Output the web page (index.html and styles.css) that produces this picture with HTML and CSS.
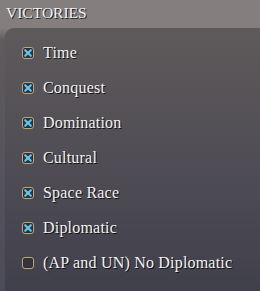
FILE: index.html
```html
<!DOCTYPE html>
<html>
<head>
<meta charset="utf-8">
<link rel="stylesheet" href="styles.css">
</head>
<body>
<div class="page">
  <h1 class="title">VICTORIES</h1>
  <div class="wrap">
    <div class="panel">
      <label class="row"><span class="box on"></span><span class="lbl">Time</span></label>
      <label class="row"><span class="box on"></span><span class="lbl">Conquest</span></label>
      <label class="row"><span class="box on"></span><span class="lbl">Domination</span></label>
      <label class="row"><span class="box on"></span><span class="lbl">Cultural</span></label>
      <label class="row"><span class="box on"></span><span class="lbl">Space Race</span></label>
      <label class="row"><span class="box on"></span><span class="lbl">Diplomatic</span></label>
      <label class="row"><span class="box"></span><span class="lbl">(AP and UN) No Diplomatic</span></label>
    </div>
  </div>
</div>
</body>
</html>
```
FILE: styles.css
```css
html, body { margin: 0; padding: 0; }
body {
  width: 260px; height: 291px; overflow: hidden;
  background: linear-gradient(#847e7f 0, #847e7f 28px, #5f5b5f 40px, #4c4b58 291px);
  font-family: "Liberation Serif", serif;
}
.page { display: flex; flex-direction: column; height: 291px; }
.title {
  margin: 0; height: 28px; box-sizing: border-box;
  padding: 4px 0 0 6px;
  font-size: 15.5px; line-height: 18px; font-weight: normal; color: #f4f4f4;
  text-shadow: 1px 1px 0 #1a1a1a;
}
.wrap { flex: 1; padding-left: 5px; }
.panel {
  height: 100%;
  border-top-left-radius: 9px;
  background: linear-gradient(#5e5a5b, #504d55 50%, #40404c);
  padding: 7px 0 0 17px;
  box-sizing: border-box;
  display: flex; flex-direction: column;
}
.row { display: flex; align-items: center; height: 35px; }
.box {
  width: 10px; height: 10px;
  border: 1.5px solid #bba67e; border-radius: 3px;
  background: #34343c;
  box-shadow: 0 0 1px #6b5f48, inset 0 0 1px #000;
  position: relative;
  margin-right: 9px;
  flex: none;
}
.box.on::before, .box.on::after {
  content: ""; position: absolute; left: 0; top: 4px;
  width: 10px; height: 2px; background: #5ccaf4; border-radius: 1px;
  transform: rotate(45deg);
}
.box.on::after { transform: rotate(-45deg); }
.lbl {
  color: #f2f2f2; font-size: 16px; letter-spacing: 0.2px;
  text-shadow: 1px 1px 0 #111;
}
```
